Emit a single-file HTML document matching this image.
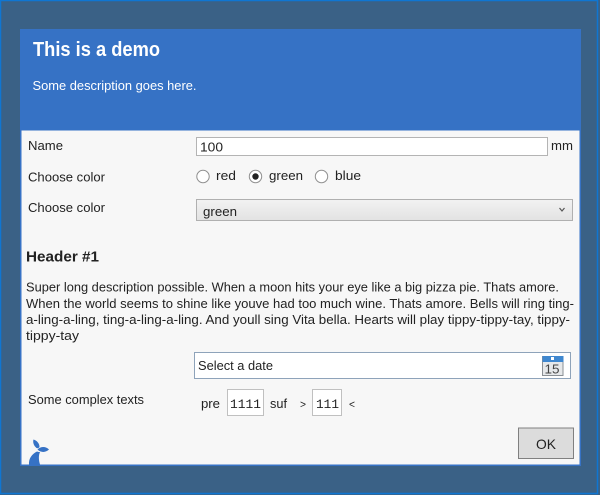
<!DOCTYPE html>
<html><head><meta charset="utf-8"><style>
html,body{margin:0;padding:0;background:#3a6186;overflow:hidden;}
svg{display:block;filter:blur(0.3px);}
text{font-family:"Liberation Sans",sans-serif;font-size:13px;fill:#222;}
</style></head><body>
<svg width="600" height="495" viewBox="0 0 600 495" xmlns="http://www.w3.org/2000/svg">
<defs><linearGradient id="g" x1="0" y1="0" x2="0" y2="1"><stop offset="0" stop-color="#f2f2f2"/><stop offset="1" stop-color="#e2e2e2"/></linearGradient></defs>
<rect width="600" height="495" fill="#3a6186"/>
<rect x="0.5" y="0.5" width="597" height="493" fill="none" stroke="#0f76d2" stroke-width="1.5"/>
<rect x="20" y="29" width="561" height="437" fill="#3672c5"/>
<rect x="21.5" y="130.5" width="558" height="334" fill="#f7f7f7"/>
<text x="33" y="56" textLength="127" lengthAdjust="spacingAndGlyphs" style="font-size:20px;font-weight:bold;fill:#fff">This is a demo</text>
<text x="32.5" y="90" textLength="164" lengthAdjust="spacingAndGlyphs" style="fill:#fff">Some description goes here.</text>
<text x="28" y="150" textLength="35" lengthAdjust="spacingAndGlyphs">Name</text>
<rect x="196.5" y="137.5" width="351" height="18" fill="#fff" stroke="#b4b4b4"/>
<text x="200" y="151.5" textLength="23" lengthAdjust="spacingAndGlyphs">100</text>
<text x="551" y="150" textLength="22" lengthAdjust="spacingAndGlyphs">mm</text>
<text x="28" y="181.5" textLength="77" lengthAdjust="spacingAndGlyphs">Choose color</text>
<circle cx="203" cy="176.5" r="6.2" fill="#fff" stroke="#8f8f8f"/>
<text x="216" y="180" textLength="20" lengthAdjust="spacingAndGlyphs">red</text>
<circle cx="255.5" cy="176.5" r="6.2" fill="#fff" stroke="#8f8f8f"/>
<circle cx="255.5" cy="176.5" r="3.2" fill="#222"/>
<text x="269" y="180" textLength="34" lengthAdjust="spacingAndGlyphs">green</text>
<circle cx="321.5" cy="176.5" r="6.2" fill="#fff" stroke="#8f8f8f"/>
<text x="335" y="180" textLength="26" lengthAdjust="spacingAndGlyphs">blue</text>
<text x="28" y="212" textLength="77" lengthAdjust="spacingAndGlyphs">Choose color</text>
<rect x="196.5" y="199.5" width="376" height="21" fill="url(#g)" stroke="#b0b0b0"/>
<text x="203" y="216" textLength="34" lengthAdjust="spacingAndGlyphs">green</text>
<path d="M559.5 208l2.5 3 2.5-3" fill="none" stroke="#555" stroke-width="1.2"/>
<text x="26" y="261.5" textLength="73" lengthAdjust="spacingAndGlyphs" style="font-size:15px;font-weight:bold">Header #1</text>
<text x="26" y="291.5" textLength="533" lengthAdjust="spacingAndGlyphs">Super long description possible. When a moon hits your eye like a big pizza pie. Thats amore.</text>
<text x="26" y="308" textLength="548" lengthAdjust="spacingAndGlyphs">When the world seems to shine like youve had too much wine. Thats amore. Bells will ring ting-</text>
<text x="26" y="324" textLength="544" lengthAdjust="spacingAndGlyphs">a-ling-a-ling, ting-a-ling-a-ling. And youll sing Vita bella. Hearts will play tippy-tippy-tay, tippy-</text>
<text x="26" y="340" textLength="53" lengthAdjust="spacingAndGlyphs">tippy-tay</text>
<rect x="194.5" y="352.5" width="376" height="26" fill="#fff" stroke="#8ea3ba"/>
<text x="198" y="370" textLength="75" lengthAdjust="spacingAndGlyphs">Select a date</text>
<rect x="542.5" y="356.5" width="20.5" height="19" fill="#e6e8ea" stroke="#8a8f94"/>
<rect x="542.5" y="356" width="21" height="6" fill="#3f87cf"/>
<rect x="551" y="357" width="3" height="3" fill="#fff"/>
<text x="544.5" y="373.5" textLength="15" lengthAdjust="spacingAndGlyphs" style="font-size:13px;fill:#444">15</text>
<text x="28" y="404" textLength="116" lengthAdjust="spacingAndGlyphs">Some complex texts</text>
<text x="201" y="408" textLength="19" lengthAdjust="spacingAndGlyphs">pre</text>
<rect x="227.5" y="389.5" width="36" height="26" fill="#fff" stroke="#c0c0c0"/>
<text x="230" y="408" textLength="31" lengthAdjust="spacingAndGlyphs" style="font-family:'Liberation Mono',monospace">1111</text>
<text x="270" y="408" textLength="17" lengthAdjust="spacingAndGlyphs">suf</text>
<text x="300" y="408" textLength="6" lengthAdjust="spacingAndGlyphs" style="font-size:11px">&gt;</text>
<rect x="312.5" y="389.5" width="29" height="26" fill="#fff" stroke="#c0c0c0"/>
<text x="316" y="408" textLength="23" lengthAdjust="spacingAndGlyphs" style="font-family:'Liberation Mono',monospace">111</text>
<text x="349" y="408" textLength="6" lengthAdjust="spacingAndGlyphs" style="font-size:11px">&lt;</text>
<rect x="518.5" y="428" width="55" height="30.5" fill="#dcdcdc" stroke="#808080"/>
<text x="536" y="449" textLength="20" lengthAdjust="spacingAndGlyphs" style="font-size:14px">OK</text>
<path d="M29 464.5c-.5-6 3-10.500 8-13 1 .5 2 .5 3 .5-1.500 3-1.500 8 0 12.500z" fill="#3672c5"/>
<path d="M36.500 448c-2.500-2-4-5.500-3-8.500 3.500 1 6 4 6 7.500-.5 1-2 1.500-3 1z" fill="#3672c5"/>
<path d="M37.500 449.500c3-3 8-3.500 11.500 0-3 3-8 3.500-11.500 0z" fill="#3672c5"/>
</svg>
</body></html>
